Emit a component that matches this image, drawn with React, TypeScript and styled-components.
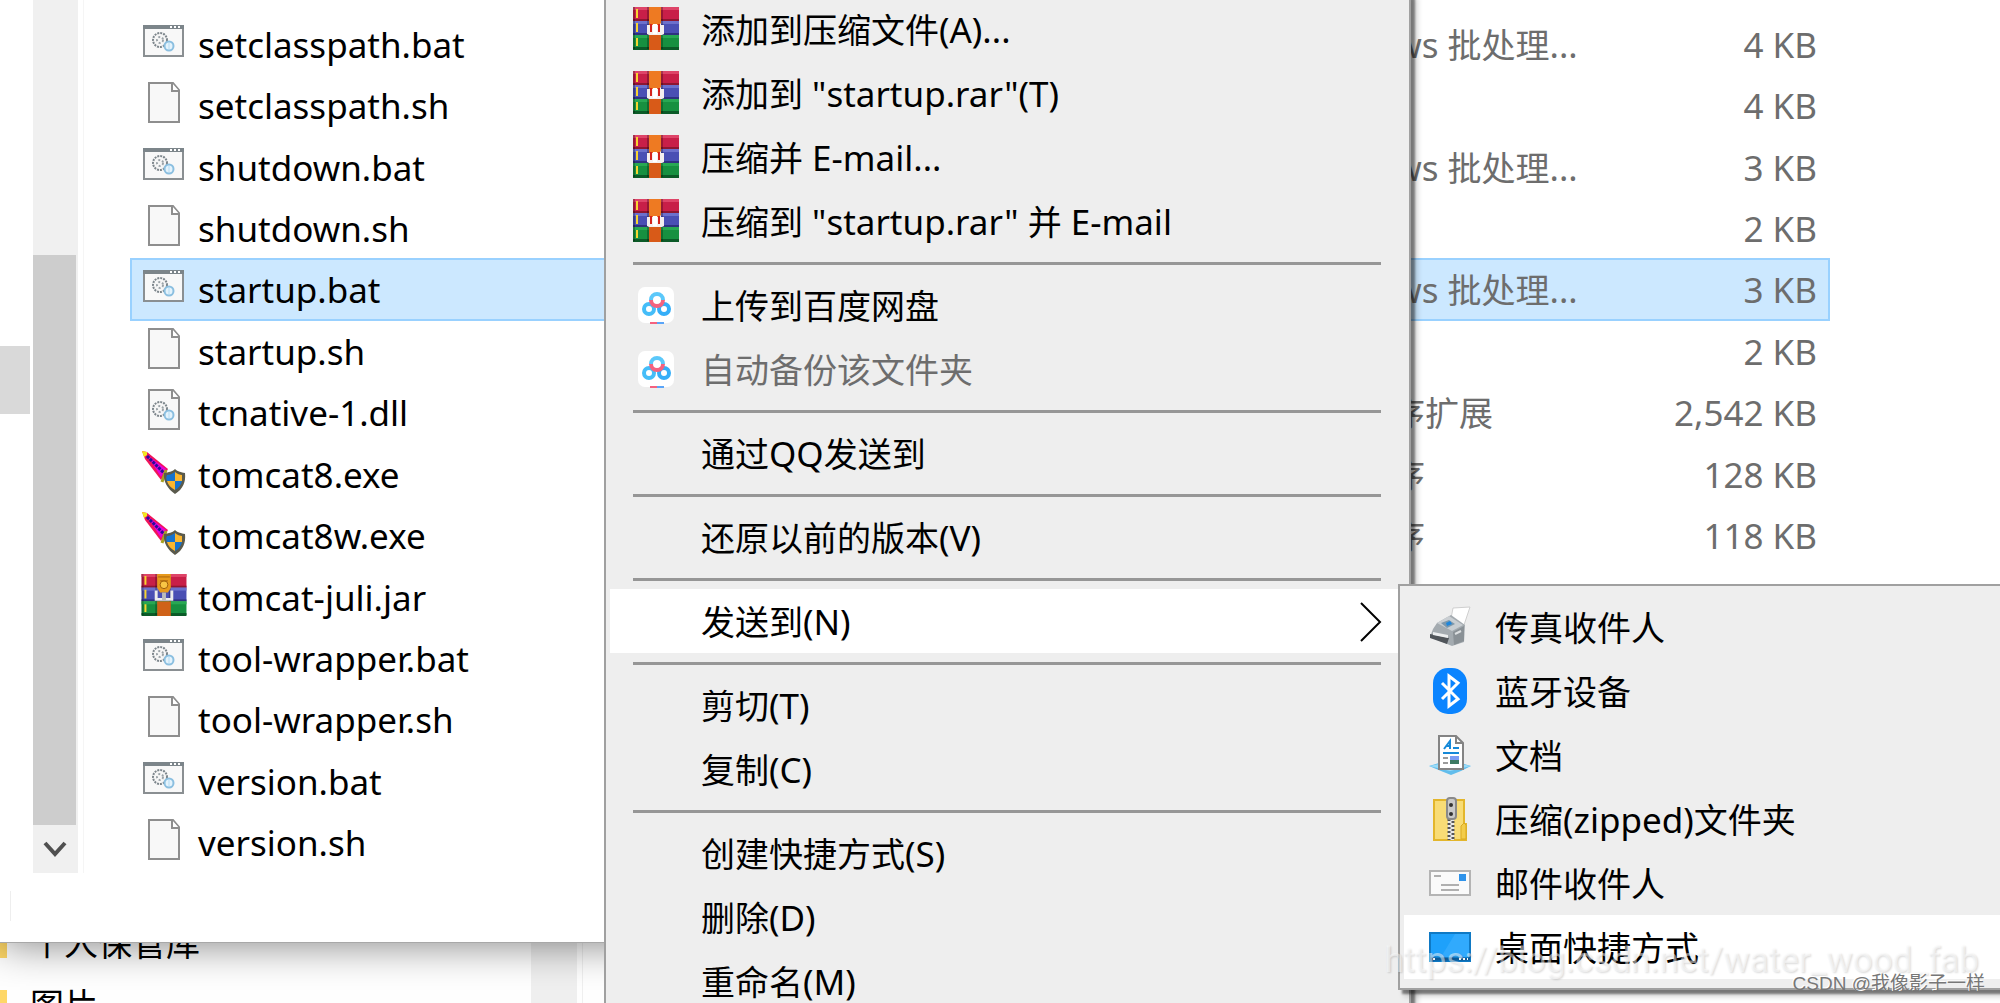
import React from "react";
import styled, { createGlobalStyle, css } from "styled-components";

const Global = createGlobalStyle`
  * { box-sizing: border-box; }
  body { margin: 0; overflow: hidden; background: #fff; }
  body, button { font-family: "Noto Sans", "Noto Sans CJK SC", sans-serif; }
`;

const Desktop = styled.main`
  position: relative;
  display: flex;
  flex-direction: column;
  height: 100vh;
  overflow: hidden;
`;

const Explorer = styled.section`
  position: relative;
  flex: 1;
  min-height: 0;
  display: flex;
  flex-direction: column;
  background: #fff;
  box-shadow: 0 1px 40px rgba(0, 0, 0, 0.5);
  border-bottom: 1px solid #a8a8a8;
`;

const ExplorerBody = styled.div`
  flex: 1;
  min-height: 0;
  display: flex;
`;

const StatusBar = styled.footer`
  height: 69px;
  padding: 18px 10px;
  &::before { content: ""; display: block; width: 1px; height: 30px; background: #eee; }
`;

const Tree = styled.nav`
  width: 33px;
  padding-top: 346px;
  flex: none;
`;

const TreeSelection = styled.div`
  width: 30px;
  height: 68px;
  background: #d9d9d9;
`;

const ScrollTrack = styled.div`
  width: 45px;
  flex: none;
  display: flex;
  flex-direction: column;
  background: #f0f0f0;
`;

const ScrollThumb = styled.div`
  margin: 255px 2px 0 0;
  flex: 1;
  background: #cdcdcd;
`;

const ScrollButton = styled.button`
  height: 48px;
  padding: 0 2px 0 0;
  border: 0;
  background: #f0f0f0;
  display: flex;
  align-items: center;
  justify-content: center;
`;

const Listing = styled.div`
  flex: 1;
  margin-left: 5px;
  padding: 13px 171px 0 47px;
  border-left: 1px solid #f5f5f5;
`;

const FileTable = styled.table`
  display: block;
  height: 100%;
  font-size: 35px;
  line-height: 40px;
  white-space: nowrap;
`;

const FileRows = styled.tbody`
  display: grid;
  height: 100%;
  grid-auto-rows: 1fr;
`;

const FileRow = styled.tr<{ $selected?: boolean }>`
  display: grid;
  grid-template-columns: 1fr 260px 280px;
  align-items: center;
  ${(p) => p.$selected && css`
    background: #cce8ff;
    outline: 2px solid #99d1ff;
    outline-offset: -1px;
  `}
`;

const NameCell = styled.td`
  padding: 2px 0 0 10px;
  color: #000;
`;

const NameInner = styled.span`
  display: flex;
  align-items: center;
  gap: 11px;
  svg { flex: none; margin-bottom: 6px; }
`;

const TypeCell = styled.td`
  padding: 2px 0 0;
  color: #6d6d6d;
`;

const SizeCell = styled.td`
  padding: 2px 12px 0 0;
  text-align: right;
  color: #6d6d6d;
`;

const Han = styled.span`
  font-size: 34px;
`;

const BackWindow = styled.section`
  flex: none;
  height: 60px;
  display: flex;
  overflow: hidden;
  background: #fff;
`;

const BackTree = styled.ul`
  list-style: none;
  margin: -31px 0 0;
  padding: 0;
  width: 531px;
`;

const BackItem = styled.li`
  display: flex;
  align-items: center;
  gap: 23px;
  height: 62px;
  font-size: 34px;
  line-height: 40px;
  &::before { content: ""; width: 7px; height: 30px; background: #ffd868; }
`;

const BackTrack = styled.div`
  width: 46px;
  margin-right: 5px;
  background: #f0f0f0;
`;

const BackPane = styled.div`
  flex: 1;
  border-left: 1px solid #f0f0f0;
`;

const menuFrame = css`
  position: absolute;
  margin: 0;
  list-style: none;
  background: #eee;
  border: 2px solid #a0a0a0;
  box-shadow: 4px 4px 2px rgba(0, 0, 0, 0.42), 6px 6px 6px rgba(0, 0, 0, 0.2);
`;

const ContextMenu = styled.ul`
  ${menuFrame}
  top: -9px;
  left: 604px;
  width: 807px;
  padding: 4px;
`;

const SubMenu = styled.ul`
  ${menuFrame}
  top: 584px;
  left: 1398px;
  width: 720px;
  padding: 9px 4px;
`;

const Item = styled.li`
  height: 64px;
`;

const ItemButton = styled.button<{ $active?: boolean }>`
  width: 100%;
  height: 100%;
  padding: 2px 22px 0 20px;
  border: 0;
  display: flex;
  align-items: center;
  text-align: left;
  font-size: 35px;
  line-height: 40px;
  white-space: pre;
  color: #000;
  background: ${(p) => (p.$active ? "#fff" : "transparent")};
  &:disabled { color: #6d6d6d; }
`;

const IconSlot = styled.span`
  flex: none;
  width: 52px;
  margin: 0 19px 2px 0;
  display: flex;
  justify-content: center;
`;

const Label = styled.span`
  flex: 1;
`;

const Separator = styled.li`
  height: 20px;
  margin: 0 24px 0 23px;
  display: flex;
  align-items: center;
  &::before { content: ""; flex: 1; height: 3px; background: #969696; }
`;

const BlogMark = styled.span`
  position: absolute;
  right: 21px;
  bottom: 20px;
  font: 35px/44px Roboto, sans-serif;
  color: rgba(255, 255, 255, 0.5);
  text-shadow: 1px 1px 2px rgba(0, 0, 0, 0.15);
  pointer-events: none;
`;

const AuthorMark = styled.span`
  position: absolute;
  right: 15px;
  bottom: 6px;
  font: 19px/26px "Liberation Sans", "Noto Sans CJK SC", sans-serif;
  color: #777;
  text-shadow: -1px -1px 0 #fff;
  pointer-events: none;
`;

/* Wraps each run of Chinese characters so that it takes its own size. */
const mixed = (text: string) =>
  text.split(/([\u4e00-\u9fff]+)/).map((part, i) => (i % 2 ? <Han key={i}>{part}</Han> : part));

const Gears = () => (
  <>
    <circle cx="17" cy="17" r="7" fill="#f6f6f6" stroke="#7d868c" strokeWidth="2" strokeDasharray="2 1" />
    <circle cx="17" cy="17" r="3" fill="none" stroke="#9aa2a7" strokeWidth="2" strokeDasharray="2 2" />
    <circle cx="26" cy="23" r="4.5" fill="#e4f3fc" stroke="#8bbfe0" strokeWidth="2" />
    <path d="M26 20v6" stroke="#b5dcf3" strokeWidth="1" />
  </>
);

const BatIcon = () => (
  <svg width="46" height="42" viewBox="0 0 46 42">
    <rect x="3" y="5" width="39" height="30" fill="#f8f8f8" stroke="#8a8f92" strokeWidth="2" />
    <path d="M2 4h41v4H2z" fill="#7c858a" />
    <path d="M29 5h2v2h-2zM33 5h2v2h-2zM37 5h2v2h-2z" fill="#fff" />
    <g transform="translate(2 2)"><Gears /></g>
  </svg>
);

const PageIcon = ({ gears = false }) => (
  <svg width="46" height="42" viewBox="0 0 46 42">
    <path d="M8 1h24l6 7v32H8z" fill="#f8f8f8" stroke="#8e8e8e" strokeWidth="2" />
    <path d="M31 1v8h7" fill="#fff" stroke="#8e8e8e" strokeWidth="2" />
    {gears && <g transform="translate(2 3)"><Gears /></g>}
  </svg>
);

const ExeIcon = () => (
  <svg width="46" height="44" viewBox="0 0 46 44">
    <path d="M1 1l5 1 21 17-7 11L4 9z" fill="#f0145a" />
    <path d="M6 5l19 14-5 8z" fill="#e800d8" />
    <path d="M6 6l17 17" stroke="#2a0a9c" strokeWidth="3" strokeDasharray="3 1" />
    <path d="M1 1l5 1v3L3 7z" fill="#f2ea1c" />
    <path d="M25 20l-4 12" stroke="#a8a020" strokeWidth="3" />
    <path d="M34 19c3 3 6 3 10 4 1 9-2 16-10 21-7-5-12-12-11-21 5-1 8-1 11-4z" fill="#5a5a4c" />
    <path d="M34 22v9h-8c-1-2-1-4 0-6 3 0 5-1 8-3zM34 31h7c-1 4-3 7-7 9z" fill="#1673cf" />
    <path d="M34 22c2 2 5 3 7 3v6h-7zM26 31h8v9c-4-2-7-5-8-9z" fill="#fbb62e" />
  </svg>
);

const Books = () => (
  <>
    <rect width="46" height="14" fill="#c81f48" />
    <rect width="46" height="3" fill="#de4468" />
    <rect y="12" width="46" height="2" fill="#8d1631" />
    <rect y="14" width="46" height="14" fill="#4a4fb4" />
    <rect y="14" width="46" height="3" fill="#6c70cc" />
    <rect y="26" width="46" height="2" fill="#2e327f" />
    <rect y="28" width="46" height="14" fill="#179040" />
    <rect y="28" width="46" height="3" fill="#28a853" />
    <rect y="40" width="46" height="3" fill="#0b5a27" />
    <path d="M4 2v9M4 16v9M4 31v8" stroke="#f7d430" strokeWidth="2" />
    <path d="M1 0v42M15 0v42M29 0v42" stroke="#000" strokeWidth="2" opacity=".25" />
  </>
);

const RarIcon = () => (
  <svg width="46" height="44" viewBox="0 0 46 44">
    <Books />
    <rect x="16" width="12" height="43" fill="#d85a18" />
    <path d="M14 18h3v-3h11v3h3v9l-2 1H16l-2-1z" fill="#f5efef" />
    <path d="M16 0h12v16l-2 2h-8l-2-2z" fill="#ee7a22" />
    <path d="M18 17v8M26 17v8" stroke="#d4231c" strokeWidth="2" />
    <path d="M20 17h4v10h-4z" fill="#fff" />
  </svg>
);

const JarIcon = () => (
  <svg width="46" height="42" viewBox="0 0 46 43">
    <Books />
    <path d="M16 28h14v15H16z" fill="#cf6218" />
    <path d="M15 17v9h16v-9" fill="none" stroke="#ececec" strokeWidth="3" />
    <path d="M16 0h14v14l-3 5h-8l-3-5z" fill="#e79a1d" />
    <circle cx="23" cy="11" r="4" fill="#f8c545" stroke="#9d5c0b" strokeWidth="1" />
    <path d="M17 3h12M19 7h8" stroke="#a9630c" strokeWidth="1" />
    <path d="M23 19v8" stroke="#bcbcbc" strokeWidth="4" />
  </svg>
);

const BaiduIcon = () => (
  <svg width="38" height="38" viewBox="0 0 38 38">
    <rect x="1" y="1" width="36" height="36" rx="7" fill="#fff" />
    <g fill="none" strokeWidth="4">
      <circle cx="12" cy="23" r="5" stroke="#45bdf8" />
      <circle cx="27" cy="23" r="5" stroke="#35aef8" />
      <path d="M14 14a6 6 0 0 1 12 0" stroke="#5bc8fa" />
      <path d="M14 14a6 6 0 0 0 12 0" stroke="#f4627f" />
    </g>
    <path d="M13 37h7" stroke="#f4627f" strokeWidth="2" />
    <path d="M20 37h7" stroke="#5aa5f8" strokeWidth="2" />
  </svg>
);

const FaxIcon = () => (
  <svg width="42" height="42" viewBox="0 0 42 42">
    <path d="M24 2l17-1-7 21-13-4z" fill="#fff" stroke="#cfcfcf" />
    <path d="M8 17l14-8 14 10-1 17-12 4L1 31l3-8z" fill="#a4abb0" />
    <path d="M8 17l12-7 14 9-11 6z" fill="#c9ced2" />
    <path d="M12 17l8-3 6 4-8 4z" fill="#7d97aa" />
    <path d="M17 17l4-2 2 3-5 2z" fill="#1d86dc" />
    <path d="M1 28l19 4-2 6L1 32z" fill="#50555a" />
    <path d="M4 26l15 3v3L4 29z" fill="#eceeef" />
    <path d="M24 26l11-6v15l-10 4z" fill="#8a9196" />
    <path d="M26 28l6-3" stroke="#dcdfe1" strokeWidth="2" />
  </svg>
);

const BluetoothIcon = () => (
  <svg width="36" height="46" viewBox="0 0 36 46">
    <rect x="1" width="34" height="46" rx="15" fill="#0a84ff" />
    <path d="M10 15l16 16-9 7V8l9 7-16 16" fill="none" stroke="#fff" strokeWidth="3" />
  </svg>
);

const DocumentIcon = () => (
  <svg width="42" height="40" viewBox="0 0 42 40">
    <path d="M0 31l10-3h22l10 3-10 5-10 4-10-4z" fill="#62bdec" />
    <path d="M0 31l21-4 21 4-21 5z" fill="#9bdcf8" />
    <path d="M10 1h17l7 7v26H10z" fill="#fff" stroke="#848484" strokeWidth="2" />
    <path d="M27 1v7h7" fill="none" stroke="#848484" strokeWidth="2" />
    <path d="M15 14l6-8v8M17 11h4M24 13h6M14 18h16" fill="none" stroke="#1689d8" strokeWidth="2" />
    <path d="M14 23h5M14 28h5" stroke="#9b9b9b" strokeWidth="2" />
    <path d="M21 21h9v4h-9z" fill="#7c9cf3" />
    <path d="M21 25h9v4h-9z" fill="#3d7a63" />
  </svg>
);

const ZipIcon = () => (
  <svg width="34" height="44" viewBox="0 0 34 44">
    <path d="M1 3h30v24h2v16H1z" fill="#f8dc76" stroke="#e3b62c" strokeWidth="2" />
    <path d="M28 42V29l3-3 2 2v14z" fill="#f3cc4a" stroke="#d9aa22" />
    <path d="M18 22v21" stroke="#e8e8e8" strokeWidth="6" />
    <path d="M16 22v21M20 24v19" stroke="#555" strokeWidth="3" strokeDasharray="2 2" />
    <rect x="14" y="1" width="9" height="21" rx="3" fill="#c9c9c9" stroke="#8a8a8a" strokeWidth="2" />
    <circle cx="18" cy="8" r="2" fill="#333" />
    <circle cx="18" cy="17" r="2" fill="#333" />
  </svg>
);

const MailIcon = () => (
  <svg width="42" height="26" viewBox="0 0 42 26">
    <rect x="1" y="1" width="40" height="24" fill="#fafafa" stroke="#b4b4b4" strokeWidth="2" />
    <path d="M5 6h7M12 15h18M12 20h18" stroke="#b0b0b0" strokeWidth="2" />
    <rect x="30" y="4" width="7" height="7" fill="#2f93ea" />
  </svg>
);

const DesktopIcon = () => (
  <svg width="42" height="30" viewBox="0 0 42 30">
    <rect x="1" y="1" width="40" height="28" fill="#1ea1fb" stroke="#0f79c4" strokeWidth="2" />
    <path d="M26 2h14v23H12z" fill="#3db0ff" opacity=".6" />
    <path d="M1 27h40" stroke="#0c5c9a" strokeWidth="3" />
    <path d="M4 27h2M30 27h2M34 27h2M38 27h1" stroke="#fff" strokeWidth="2" />
  </svg>
);

const icons = {
  bat: <BatIcon />,
  page: <PageIcon />,
  dll: <PageIcon gears />,
  exe: <ExeIcon />,
  jar: <JarIcon />,
};

type FileEntry = { name: string; icon: keyof typeof icons; type: string; size: string };

const files: FileEntry[] = [
  { name: "setclasspath.bat", icon: "bat", type: "Windows 批处理...", size: "4 KB" },
  { name: "setclasspath.sh", icon: "page", type: "SH 文件", size: "4 KB" },
  { name: "shutdown.bat", icon: "bat", type: "Windows 批处理...", size: "3 KB" },
  { name: "shutdown.sh", icon: "page", type: "SH 文件", size: "2 KB" },
  { name: "startup.bat", icon: "bat", type: "Windows 批处理...", size: "3 KB" },
  { name: "startup.sh", icon: "page", type: "SH 文件", size: "2 KB" },
  { name: "tcnative-1.dll", icon: "dll", type: "应用程序扩展", size: "2,542 KB" },
  { name: "tomcat8.exe", icon: "exe", type: "应用程序", size: "128 KB" },
  { name: "tomcat8w.exe", icon: "exe", type: "应用程序", size: "118 KB" },
  { name: "tomcat-juli.jar", icon: "jar", type: "", size: "" },
  { name: "tool-wrapper.bat", icon: "bat", type: "", size: "" },
  { name: "tool-wrapper.sh", icon: "page", type: "", size: "" },
  { name: "version.bat", icon: "bat", type: "", size: "" },
  { name: "version.sh", icon: "page", type: "", size: "" },
];

type MenuEntry = { label: string; icon?: React.ReactNode; disabled?: boolean; active?: boolean; sub?: boolean } | null;

const menu: MenuEntry[] = [
  { label: "添加到压缩文件(A)...", icon: <RarIcon /> },
  { label: '添加到 "startup.rar"(T)', icon: <RarIcon /> },
  { label: "压缩并 E-mail...", icon: <RarIcon /> },
  { label: '压缩到 "startup.rar" 并 E-mail', icon: <RarIcon /> },
  null,
  { label: "上传到百度网盘", icon: <BaiduIcon /> },
  { label: "自动备份该文件夹", icon: <BaiduIcon />, disabled: true },
  null,
  { label: "通过QQ发送到" },
  null,
  { label: "还原以前的版本(V)" },
  null,
  { label: "发送到(N)", active: true, sub: true },
  null,
  { label: "剪切(T)" },
  { label: "复制(C)" },
  null,
  { label: "创建快捷方式(S)" },
  { label: "删除(D)" },
  { label: "重命名(M)" },
];

const sendTo: MenuEntry[] = [
  { label: "传真收件人", icon: <FaxIcon /> },
  { label: "蓝牙设备", icon: <BluetoothIcon /> },
  { label: "文档", icon: <DocumentIcon /> },
  { label: "压缩(zipped)文件夹", icon: <ZipIcon /> },
  { label: "邮件收件人", icon: <MailIcon /> },
  { label: "桌面快捷方式", icon: <DesktopIcon />, active: true },
];

const MenuItems = ({ entries }: { entries: MenuEntry[] }) => (
  <>
    {entries.map((entry, i) =>
      entry ? (
        <Item key={i}>
          <ItemButton type="button" $active={entry.active} disabled={entry.disabled}>
            <IconSlot>{entry.icon}</IconSlot>
            <Label>{mixed(entry.label)}</Label>
            {entry.sub && (
              <svg width="24" height="42" viewBox="0 0 24 42">
                <path d="M2 2l19 19L2 40" fill="none" stroke="#000" strokeWidth="2" />
              </svg>
            )}
          </ItemButton>
        </Item>
      ) : (
        <Separator key={i} role="separator" />
      ),
    )}
  </>
);

export default function App() {
  return (
    <>
      <Global />
      <Desktop>
        <Explorer>
          <ExplorerBody>
            <Tree><TreeSelection /></Tree>
            <ScrollTrack>
              <ScrollThumb />
              <ScrollButton type="button" aria-label="向下滚动">
                <svg width="24" height="20" viewBox="0 0 24 20">
                  <path d="M2 4l10 11L22 4" fill="none" stroke="#505050" strokeWidth="4" />
                </svg>
              </ScrollButton>
            </ScrollTrack>
            <Listing>
              <FileTable>
                <FileRows>
                  {files.map((file) => (
                    <FileRow key={file.name} $selected={file.name === "startup.bat"}>
                      <NameCell>
                        <NameInner>
                          {icons[file.icon]}
                          {file.name}
                        </NameInner>
                      </NameCell>
                      <TypeCell>{mixed(file.type)}</TypeCell>
                      <SizeCell>{file.size}</SizeCell>
                    </FileRow>
                  ))}
                </FileRows>
              </FileTable>
            </Listing>
          </ExplorerBody>
          <StatusBar />
        </Explorer>
        <BackWindow>
          <BackTree>
            <BackItem>个人保管库</BackItem>
            <BackItem>图片</BackItem>
          </BackTree>
          <BackTrack />
          <BackPane />
        </BackWindow>
        <ContextMenu>
          <MenuItems entries={menu} />
        </ContextMenu>
        <SubMenu>
          <MenuItems entries={sendTo} />
        </SubMenu>
        <BlogMark>https://blog.csdn.net/water_wood_fab</BlogMark>
        <AuthorMark>CSDN @我像影子一样</AuthorMark>
      </Desktop>
    </>
  );
}
